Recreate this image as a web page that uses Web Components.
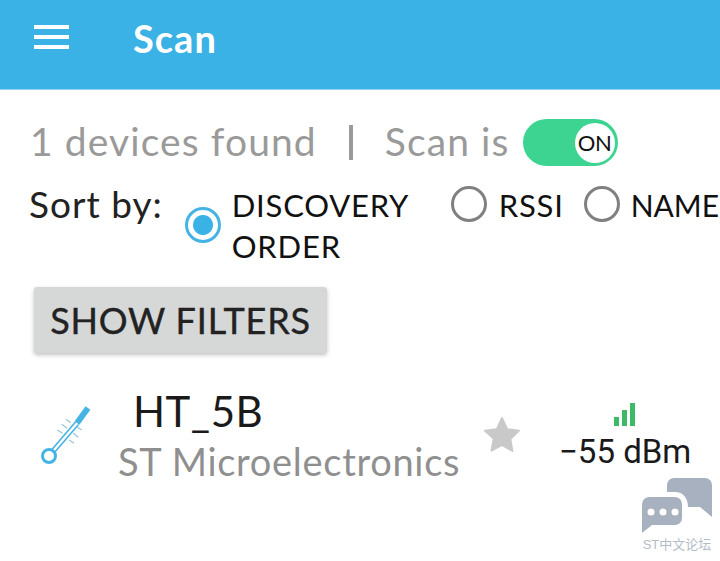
<!DOCTYPE html>
<html>
<head>
<meta charset="utf-8">
<title>Scan</title>
<style>
    html, body { margin: 0; padding: 0; background: #fff; }
    body { width: 720px; height: 561px; overflow: hidden; position: relative; font-family: Lato, "Noto Sans", sans-serif; }
</style>
</head>
<body>
<scan-app>
    <app-bar>Scan</app-bar>
    <scan-status count="1"></scan-status>
    <sort-row>
        <radio-option checked wide>DISCOVERY ORDER</radio-option>
        <radio-option>RSSI</radio-option>
        <radio-option style="font-size:30px;letter-spacing:0;gap:11px">NAME</radio-option>
    </sort-row>
    <raised-button>SHOW FILTERS</raised-button>
    <device-row name="HT_5B" vendor="ST Microelectronics" rssi="−55 dBm"></device-row>
</scan-app>
<forum-mark></forum-mark>

<script>
(function(){

customElements.define('scan-app', class extends HTMLElement {
    constructor()
    {
        super();
        this.attachShadow({mode: 'open'}).innerHTML = `
<style>
    :host{ display: flex; flex-direction: column; }
</style>
<slot></slot>`;
    }
});

customElements.define('app-bar', class extends HTMLElement {
    constructor()
    {
        super();
        this.attachShadow({mode: 'open'}).innerHTML = `
<style>
    :host{
        display: flex;
        align-items: center;
        height: 89px;
        padding-left: 34px;
        gap: 64px;
        background: #3bb2e6;
        border-bottom: 1px solid #8fd3f0;
        color: #fff;
        font-size: 38px;
        font-weight: 700;
        letter-spacing: 1px;
    }
    svg{ display: block; }
    span{ position: relative; top: -7px; }
</style>
<svg width="35" height="24" viewBox="0 0 35 24" style="margin-top:-15px">
    <path d="M0 2h35M0 12h35M0 22h35" stroke="#fff" stroke-width="3.8" fill="none"/>
</svg>
<span><slot></slot></span>`;
    }
});

customElements.define('toggle-switch', class extends HTMLElement {
    constructor()
    {
        super();
        this.attachShadow({mode: 'open'}).innerHTML = `
<style>
    :host{
        display: flex;
        justify-content: flex-end;
        align-items: center;
        box-sizing: border-box;
        width: 95px;
        height: 47px;
        padding: 3px;
        border-radius: 24px;
        background: #3dd492;
    }
    div{
        width: 40px;
        height: 40px;
        border-radius: 50%;
        background: #fff;
        display: flex;
        align-items: center;
        justify-content: center;
        color: #111;
        font-size: 22px;
        letter-spacing: -0.5px;
    }
</style>
<div>ON</div>`;
    }
});

customElements.define('scan-status', class extends HTMLElement {
    constructor()
    {
        super();
        this.attachShadow({mode: 'open'}).innerHTML = `
<style>
    :host{
        display: flex;
        align-items: center;
        height: 47px;
        margin-top: 29px;
        padding-left: 30px;
        color: #9a9a9a;
        font-size: 39px;
        letter-spacing: 1.1px;
        white-space: nowrap;
    }
    span{ margin-bottom: 3px; }
    i{ width: 4px; height: 35px; background: #9a9a9a; margin: 0 32px 0 32px; }
    toggle-switch{ margin-left: 13px; }
</style>
<span id="n"></span><i></i><span>Scan is</span><toggle-switch></toggle-switch>`;
        this.shadowRoot.getElementById('n').textContent = this.getAttribute('count') + ' devices found';
    }
});

customElements.define('sort-row', class extends HTMLElement {
    constructor()
    {
        super();
        this.attachShadow({mode: 'open'}).innerHTML = `
<style>
    :host{
        display: flex;
        align-items: flex-start;
        margin-top: 17px;
        padding-left: 29px;
        white-space: nowrap;
    }
    .lbl{ color: #222; font-size: 37px; letter-spacing: 1px; line-height: 42px; margin-right: 22px; }
    .opts{ display: flex; gap: 20px; padding-top: 2px; }
</style>
<span class="lbl">Sort by:</span>
<div class="opts"><slot></slot></div>`;
    }
});

customElements.define('radio-option', class extends HTMLElement {
    constructor()
    {
        super();
        this.attachShadow({mode: 'open'}).innerHTML = `
<style>
    :host{
        display: flex;
        align-items: flex-start;
        gap: 12px;
        color: #111;
        font-size: 31px;
        letter-spacing: .8px;
        line-height: 41px;
    }
    :host([wide]){ width: 246px; white-space: normal; gap: 11px; align-items: center; }
    i{
        flex: none;
        box-sizing: border-box;
        width: 36px;
        height: 36px;
        border: 3.5px solid #808080;
        border-radius: 50%;
        margin-top: 1px;
    }
    :host([checked]) i{
        border-color: #45b4e4;
        background: radial-gradient(circle, #3bb2e6 0 9.500px, transparent 10.500px);
        margin-top: -3px;
    }
    span{ display: block; width: min-content; }
</style>
<i></i><span><slot></slot></span>`;
    }
});

customElements.define('raised-button', class extends HTMLElement {
    constructor()
    {
        super();
        this.attachShadow({mode: 'open'}).innerHTML = `
<style>
    :host{
        display: flex;
        align-items: center;
        justify-content: center;
        align-self: flex-start;
        width: 293px;
        height: 66px;
        margin: 20px 0 0 34px;
        border-radius: 3px;
        background: #d6d7d7;
        box-shadow: 0 2px 4px rgba(0,0,0,.25);
        color: #222;
        font-size: 36px;
        letter-spacing: .8px;
        -webkit-text-stroke: .4px #222;
        white-space: nowrap;
    }
</style>
<slot></slot>`;
    }
});

customElements.define('device-row', class extends HTMLElement {
    constructor()
    {
        super();
        this.attachShadow({mode: 'open'}).innerHTML = `
<style>
    :host{
        display: flex;
        align-items: flex-start;
        margin-top: 33px;
        padding-left: 40px;
        white-space: nowrap;
    }
    .txt{ margin-left: 26px; width: 365px; flex: none; }
    .name{ color: #1a1a1a; font-size: 42px; line-height: 50px; margin-left: 15px; letter-spacing: .5px; }
    .vendor{ color: #8f8f8f; font-size: 38px; letter-spacing: .7px; line-height: 46px; margin-top: 2px; }
    .star{ margin-top: 30px; flex: none; }
    .sig{ margin-left: 38px; display: flex; flex-direction: column; align-items: center; }
    .sig svg{ display: block; margin-top: 17px; }
    .db{ font-family: Roboto, sans-serif; font-size: 33px; line-height: 40px; color: #1a1a1a; margin-top: 6px; }
</style>
<svg width="52" height="62" viewBox="0 0 52 62" style="flex:none;margin-top:19px">
    <circle cx="9" cy="51" r="6.500" fill="none" stroke="#45b4e4" stroke-width="3"/>
    <path d="M11.500 45L35.500 17M14.500 47.500L38.500 19.500" stroke="#45b4e4" stroke-width="1.600" fill="none"/>
    <path d="M37 18L48 3" stroke="#45b4e4" stroke-width="6" fill="none"/>
    <path d="M26 14.300l4.700 3.400M21.700 19.300l5.600 4M17.300 25l5.400 3.300M36.700 21.700l5 3.300M33.300 28.300l5 4M29.300 35l4.700 3.300" stroke="#9cc8d8" stroke-width="1.300" fill="none"/>
</svg>
<div class="txt">
    <div class="name" id="name"></div>
    <div class="vendor" id="vendor"></div>
</div>
<svg class="star" width="38" height="36" viewBox="0 0 40 38">
    <path d="M20 2l5.500 11.800 12.500 1.700-9.200 8.800 2.300 12.700L20 30.500 8.900 36.500l2.300-12.700L2 15.500l12.500-1.700z" fill="#c9c9c9" stroke="#c9c9c9" stroke-width="2" stroke-linejoin="round"/>
</svg>
<div class="sig">
    <svg width="22" height="23" viewBox="0 0 22 23">
        <path d="M0 14h5v9H0zM8 7h5v16H8zM16 0h5v23h-5z" fill="#3cba66"/>
    </svg>
    <div class="db" id="db"></div>
</div>`;
        const root = this.shadowRoot;
        root.getElementById('name').textContent = this.getAttribute('name');
        root.getElementById('vendor').textContent = this.getAttribute('vendor');
        root.getElementById('db').textContent = this.getAttribute('rssi');
    }
});

// sits over the page corner, it is not part of the flow
customElements.define('forum-mark', class extends HTMLElement {
    constructor()
    {
        super();
        this.attachShadow({mode: 'open'}).innerHTML = `
<style>
    :host{
        position: absolute;
        left: 641px;
        top: 478px;
        width: 72px;
        display: flex;
        flex-direction: column;
        align-items: center;
    }
    svg{ display: block; }
    span{
        font: 13px "Liberation Sans", "Noto Sans CJK SC", sans-serif;
        color: #b4bcc7;
        white-space: nowrap;
    }
</style>
<svg width="72" height="56" viewBox="0 0 72 56">
    <path d="M26 7a7 7 0 0 1 7-7h31a7 7 0 0 1 7 7v32L59 29H47c0-9-5-15-13-15H26z" fill="#a7b1bf"/>
    <path d="M8 19h26a7 7 0 0 1 7 7v14a7 7 0 0 1-7 7H11L1 55V26a8 8 0 0 1 7-7z" fill="#a7b1bf"/>
    <circle cx="10" cy="34" r="3.500" fill="#fff"/><circle cx="22" cy="34" r="3.500" fill="#fff"/><circle cx="34" cy="34" r="3.500" fill="#fff"/>
</svg>
<span>ST中文论坛</span>`;
    }
});

})();
</script>
</body>
</html>
